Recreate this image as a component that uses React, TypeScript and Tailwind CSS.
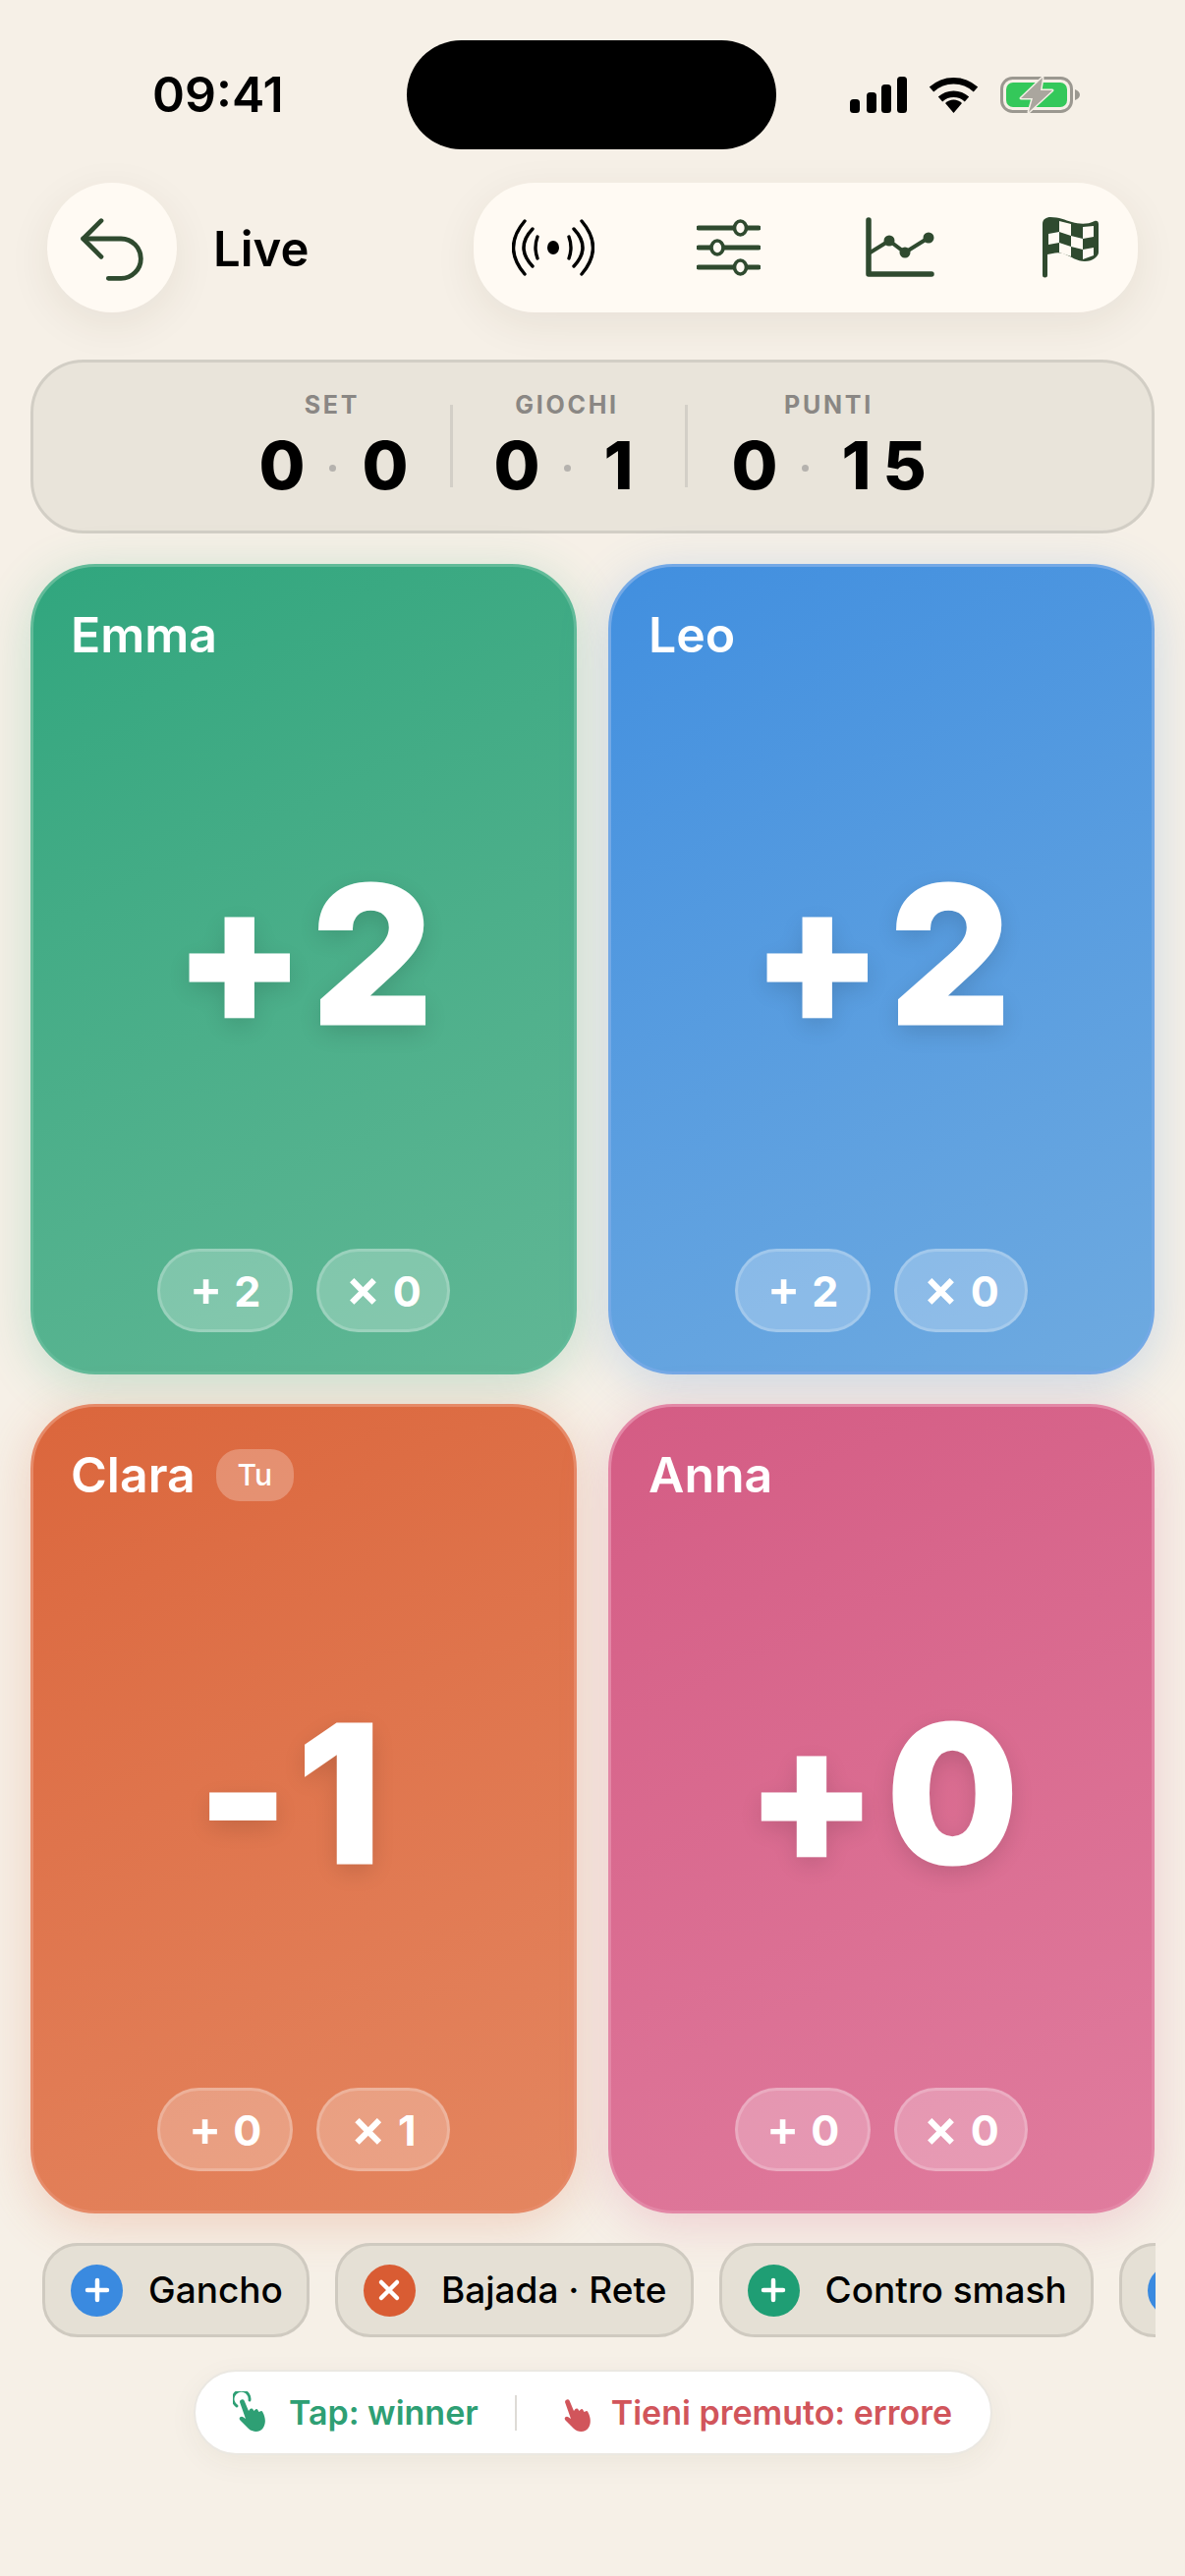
import { Undo2 } from "lucide-react";
import clsx from "clsx";

const players = [
  {
    name: "Emma",
    score: "+2",
    scoreOffset: "pl-[10px]",
    winners: "2",
    errors: "0",
    card: "from-[#30a67e] to-[#60b795] border-[#62bb99] shadow-[0_10px_50px_rgba(48,166,126,0.24)]",
  },
  {
    name: "Leo",
    score: "+2",
    scoreOffset: "pl-[10px]",
    winners: "2",
    errors: "0",
    card: "from-[#418fdf] to-[#6eaae0] border-[#74a9e6] shadow-[0_10px_50px_rgba(65,143,223,0.24)]",
  },
  {
    name: "Clara",
    you: true,
    score: "-1",
    scoreOffset: "pr-[18px]",
    winners: "0",
    errors: "1",
    card: "from-[#db663c] to-[#e48660] border-[#e68a68] shadow-[0_10px_50px_rgba(219,102,60,0.24)]",
  },
  {
    name: "Anna",
    score: "+0",
    scoreOffset: "pl-[12px]",
    winners: "0",
    errors: "0",
    card: "from-[#d45c84] to-[#e07c9e] border-[#e387a6] shadow-[0_10px_50px_rgba(212,92,132,0.24)]",
  },
];

const chips = [
  { label: "Gancho", plus: true, color: "bg-[#3a8ae0]" },
  { label: "Bajada · Rete", plus: false, color: "bg-[#d95c33]" },
  { label: "Contro smash", plus: true, color: "bg-[#1f9e74]" },
  { label: "Volée", plus: true, color: "bg-[#3a8ae0]" },
];

const SignalIcon = () => (
  <svg width="58" height="37" viewBox="0 0 58 37">
    <rect x="0" y="23" width="10" height="14" rx="3.5" />
    <rect x="17" y="16" width="10" height="21" rx="3.5" />
    <rect x="32" y="8" width="10" height="29" rx="3.5" />
    <rect x="48" y="0" width="10" height="37" rx="3.5" />
  </svg>
);

const WifiIcon = () => (
  <svg width="51" height="37" viewBox="0 0 51 37" fill="none" stroke="#000" strokeWidth="6.5">
    <path d="M3 13 A 33 33 0 0 1 48 13" />
    <path d="M12 23 A 20 20 0 0 1 39 23" />
    <path d="M17 27 A 12 12 0 0 1 34 27 L25.5 37 Z" fill="#000" stroke="none" />
  </svg>
);

const BatteryIcon = () => (
  <svg width="82" height="39" viewBox="0 0 82 39" fill="none">
    <rect x="1.5" y="2.5" width="71" height="34" rx="11" stroke="#9b9890" strokeWidth="3" />
    <rect x="6" y="7" width="62" height="25" rx="7" fill="#34c85a" />
    <path d="M76 14 C79 15 81 17 81 19.5 C81 22 79 24 76 25 Z" fill="#9b9890" />
    <polygon points="43,2 21,23 33,23 29,37 53,15 41,15" fill="#aaa69e" stroke="#f5efe6" strokeWidth="3" strokeLinejoin="round" paintOrder="stroke" />
  </svg>
);

const LiveIcon = () => (
  <svg width="84" height="58" viewBox="0 0 84 58" fill="none" stroke="#000" strokeWidth="3.4" strokeLinecap="round">
    <ellipse cx="42" cy="29" rx="6" ry="7" fill="#000" stroke="none" />
    <path d="M26 18 Q22 29 26 40" />
    <path d="M21 10 Q3 29 21 48" />
    <path d="M13 2 Q-10 29 13 56" />
    <path d="M58 18 Q62 29 58 40" />
    <path d="M63 10 Q81 29 63 48" />
    <path d="M71 2 Q94 29 71 56" />
  </svg>
);

const SlidersIcon = () => (
  <svg width="65" height="58" viewBox="0 0 65 58" fill="none" stroke="#2f4a2f" strokeLinecap="round">
    <path d="M2 9 H63 M2 29 H63 M2 49 H63" strokeWidth="5" />
    <ellipse cx="44.5" cy="9" rx="6" ry="7" fill="#fffaf3" strokeWidth="3.6" />
    <ellipse cx="21" cy="29" rx="6" ry="7" fill="#fffaf3" strokeWidth="3.6" />
    <ellipse cx="44.5" cy="49" rx="6" ry="7" fill="#fffaf3" strokeWidth="3.6" />
  </svg>
);

const ChartIcon = () => (
  <svg width="70" height="62" viewBox="0 0 70 62" fill="none" stroke="#2f4a2f" strokeLinecap="round" strokeLinejoin="round">
    <path d="M3 3 V58 H67" strokeWidth="5.5" />
    <path d="M3 37 L24 24 L40 36 L64 21" strokeWidth="4" />
    <circle cx="24" cy="24" r="5.5" fill="#2f4a2f" stroke="none" />
    <circle cx="40" cy="36" r="5.5" fill="#2f4a2f" stroke="none" />
    <circle cx="64" cy="21" r="5.5" fill="#2f4a2f" stroke="none" />
  </svg>
);

const FlagIcon = () => (
  <svg width="58" height="64" viewBox="0 0 58 64">
    <path
      d="M1 8 C1 3 5 1 9 1 C18 1 24 4 31 6 C38 8 46 9 54 5 C56 4 58 5 58 8 V37 C58 41 52 46 44 46 C36 46 30 41 22 38 C16 36 11 38 6 39 V60 a2.5 2.5 0 0 1 -5 0 Z"
      fill="#2f4a2f"
    />
    <g fill="#fffaf3">
      <polygon points="18,5 30,8 30,20 18,16" />
      <polygon points="42,11 53,10 53,21 42,23" />
      <polygon points="7,18 18,16 18,27 7,29" />
      <polygon points="30,20 42,23 42,34 30,31" />
      <polygon points="18,27 30,31 30,41 18,37" />
      <polygon points="42,34 53,32 53,40 42,44" />
    </g>
  </svg>
);

const HandIcon = ({ ring, color }: { ring?: boolean; color: string }) => (
  <svg width="36" height="44" viewBox="12 8 36 44" fill="none">
    {ring && <path d="M16 23 a8.5 8.5 0 1 1 13 -6" stroke={color} strokeWidth="2.8" strokeLinecap="round" />}
    <path
      d="M19 19 a2.5 2.5 0 0 1 4.6 -1.5 L28 28 l1.5 -2 a1.8 1.8 0 0 1 3 .5 l1 1.5 l1.2 -1.3 a1.8 1.8 0 0 1 2.8 .6 l1 1.7 l1.2 -.6 a2 2 0 0 1 2.8 1 C45 34 46 40 43 45 C40 50 32 50 28 46 L19 37 a2.2 2.2 0 0 1 3 -3 L25 36 Z"
      fill={color}
    />
  </svg>
);

const Digits = ({ value }: { value: string }) => (
  <span className="flex gap-[5px]">
    {value.split("").map((digit, i) => (
      <span key={i} className="w-[44px] text-center">
        {digit}
      </span>
    ))}
  </span>
);

const ScoreBlock = ({ label, a, b }: { label: string; a: string; b: string }) => (
  <div className="flex flex-col items-center">
    <span className="mb-[5px] text-[25px] leading-[30px] font-bold tracking-[0.11em] text-[#8a8784]">{label}</span>
    <div className="mt-[12px] flex items-center gap-[27px] text-[68px] leading-[58px] font-extrabold text-black">
      <Digits value={a} />
      <span className="mt-[8px] size-[7px] rounded-full bg-[#b5b2ae]" />
      <Digits value={b} />
    </div>
  </div>
);

const PlayerCard = ({ player }: { player: (typeof players)[number] }) => (
  <div className={clsx("flex flex-col rounded-[66px] border-[3px] bg-linear-155 pb-[40px] text-white", player.card)}>
    <div className="mt-[43px] flex h-[53px] items-center gap-[21px] pl-[38px]">
      <span className="text-[50px] font-semibold">{player.name}</span>
      {player.you && (
        <span className="flex h-[53px] w-[79px] items-center justify-center rounded-[24px] bg-white/25 text-[30px] font-medium">
          Tu
        </span>
      )}
    </div>
    <div
      className={clsx(
        "flex flex-1 items-center justify-center text-[194px] leading-none font-extrabold tracking-[10px] [-webkit-text-stroke:3px_white] [text-shadow:0_8px_24px_rgba(0,0,0,0.14)]",
        player.scoreOffset,
      )}
    >
      {player.score}
    </div>
    <div className="flex justify-center gap-[24px]">
      <span className="flex h-[85px] w-[138px] items-center justify-center gap-[12px] rounded-full border-[3px] border-white/20 bg-white/25 pt-[2px] text-[43px] font-bold">
        <span className="pb-[6px] text-[50px] leading-none font-semibold">+</span>
        <span>{player.winners}</span>
      </span>
      <span className="flex h-[85px] w-[136px] items-center justify-center gap-[12px] rounded-full border-[3px] border-white/20 bg-white/25 pt-[2px] text-[43px] font-bold">
        <span className="pb-[6px] text-[54px] leading-none font-semibold">×</span>
        <span>{player.errors}</span>
      </span>
    </div>
  </div>
);

export default function App() {
  return (
    <div className="flex h-[2622px] w-[1206px] flex-col overflow-hidden bg-[#f6f0e7] pt-[41px] font-[Inter,sans-serif] text-black">
      {/* status bar */}
      <div className="flex h-[111px] items-center pl-[155px]">
        <span className="w-[259px] text-[50px] font-semibold">09:41</span>
        <div className="h-[111px] w-[376px] rounded-full bg-black" />
        <div className="ml-[75px] flex items-center gap-[22px]">
          <SignalIcon />
          <WifiIcon />
          <BatteryIcon />
        </div>
      </div>

      {/* header */}
      <div className="mt-[34px] flex items-center px-[48px]">
        <div className="flex size-[132px] items-center justify-center rounded-full bg-[#fffaf3] pt-[3px] text-[#2f4a2f] shadow-[0_12px_44px_rgba(60,50,20,0.08)]">
          <Undo2 size={88} strokeWidth={1.3} />
        </div>
        <span className="mt-[4px] ml-[37px] text-[49px] font-semibold">Live</span>
        <div className="ml-auto flex h-[132px] w-[676px] items-center rounded-[62px] bg-[#fffaf3] pl-[39px] shadow-[0_12px_44px_rgba(60,50,20,0.08)]">
          <LiveIcon />
          <span className="ml-[104px]">
            <SlidersIcon />
          </span>
          <span className="ml-[107px]">
            <ChartIcon />
          </span>
          <span className="ml-[109px]">
            <FlagIcon />
          </span>
        </div>
      </div>

      {/* score */}
      <div className="mx-[31px] mt-[48px] flex h-[177px] items-center justify-center gap-[45px] rounded-[54px] border-[3px] border-[#d2cec5] bg-[#e9e4da] pb-[11px]">
        <ScoreBlock label="SET" a="0" b="0" />
        <div className="mt-[10px] -mr-[3px] h-[84px] w-[3px] bg-[#d3cfc7]" />
        <ScoreBlock label="GIOCHI" a="0" b="1" />
        <div className="mt-[10px] h-[84px] w-[3px] bg-[#d3cfc7]" />
        <ScoreBlock label="PUNTI" a="0" b="15" />
      </div>

      {/* players */}
      <div className="mx-[31px] mt-[31px] grid h-[1679px] grid-cols-2 grid-rows-2 gap-x-[32px] gap-y-[30px]">
        {players.map((player) => (
          <PlayerCard key={player.name} player={player} />
        ))}
      </div>

      {/* recent shots */}
      <div className="mt-[30px] ml-[43px] flex w-[1133px] gap-[26px] overflow-hidden">
        {chips.map((chip) => (
          <div
            key={chip.label}
            className="flex h-[96px] shrink-0 items-center gap-[26px] rounded-[36px] border-[3px] border-[#cfcac0] bg-[#e5e0d5] pr-[24px] pl-[26px] text-[37px] font-medium"
          >
            <span className={clsx("flex size-[53px] items-center justify-center rounded-full", chip.color)}>
              <svg width="28" height="28" viewBox="0 0 28 28" stroke="#fff" strokeWidth="4.5" strokeLinecap="round">
                {chip.plus ? <path d="M14 4 V24 M4 14 H24" /> : <path d="M6 6 L22 22 M22 6 L6 22" />}
              </svg>
            </span>
            {chip.label}
          </div>
        ))}
      </div>

      {/* hint */}
      <div className="mt-[33px] ml-[197px] flex h-[87px] w-[813px] items-center rounded-[44px] border-[2px] border-[#ebe8e2] bg-white pl-[38px] text-[34px] font-semibold shadow-[0_8px_30px_rgba(60,50,20,0.05)]">
        <HandIcon ring color="#2e9f74" />
        <span className="ml-[21px] text-[#2e9f74]">Tap: winner</span>
        <span className="ml-[37px] h-[36px] w-[2px] bg-[#dedbd6]" />
        <span className="ml-[42px]">
          <HandIcon color="#d1555b" />
        </span>
        <span className="ml-[18px] text-[#d1555b]">Tieni premuto: errore</span>
      </div>
    </div>
  );
}
